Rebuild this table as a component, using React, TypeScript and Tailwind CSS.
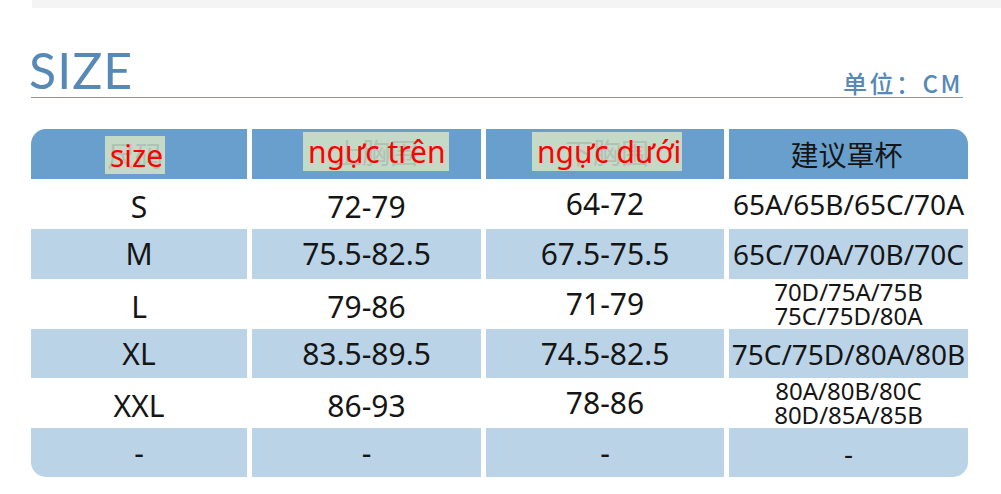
import React from 'react';

const sans = "font-['Noto_Sans','Noto_Sans_CJK_SC',sans-serif]";

type Row = {
  size: string;
  top: string;
  under: string;
  cup: string[];
  shaded: boolean;
  h: string;
};

const rows: Row[] = [
  { size: 'S', top: '72-79', under: '64-72', cup: ['65A/65B/65C/70A'], shaded: false, h: 'h-[50px]' },
  { size: 'M', top: '75.5-82.5', under: '67.5-75.5', cup: ['65C/70A/70B/70C'], shaded: true, h: 'h-[50px]' },
  { size: 'L', top: '79-86', under: '71-79', cup: ['70D/75A/75B', '75C/75D/80A'], shaded: false, h: 'h-[50px]' },
  { size: 'XL', top: '83.5-89.5', under: '74.5-82.5', cup: ['75C/75D/80A/80B'], shaded: true, h: 'h-[49px]' },
  { size: 'XXL', top: '86-93', under: '78-86', cup: ['80A/80B/80C', '80D/85A/85B'], shaded: false, h: 'h-[50px]' },
  { size: '-', top: '-', under: '-', cup: ['-'], shaded: true, h: 'h-[49px]' },
];

// red Vietnamese label pasted over the faded Chinese heading
const Label: React.FC<{ text: string; ghost: string; box: string }> = ({ text, ghost, box }) => (
  <div className={`relative bg-[#c5d9c7] ${box}`}>
    <span className="absolute inset-0 flex items-center justify-center font-['Noto_Sans_CJK_SC',sans-serif] text-[28px] leading-none text-[#b0c2b2]">
      {ghost}
    </span>
    <span className="relative block pl-[5px] font-['Noto_Sans',sans-serif] text-[30px] leading-[39px] text-[#ff0000] whitespace-nowrap">
      {text}
    </span>
  </div>
);

const App: React.FC = () => {
  return (
    <div className="w-[1001px] h-[494px] bg-white overflow-hidden">
      <div className="ml-[32px] h-[8px] bg-[#f4f4f4]" />

      <div className="ml-[31px] w-[932px] h-[90px] flex items-end justify-between border-b border-[#6f9bc5]">
        <span className="mb-[2px] -ml-[2px] font-['Lato',sans-serif] text-[50px] leading-none tracking-[1px] text-[#5689b6]">
          SIZE
        </span>
        <span className="mb-[2px] font-['Noto_Sans_CJK_SC',sans-serif] font-medium text-[24px] leading-none tracking-[2.5px] text-[#5689b6]">
          单位：CM
        </span>
      </div>

      <div className="ml-[31px] mt-[31px] w-[937px] grid grid-cols-[216px_229px_238px_239px] gap-x-[5px] text-[#151515]">
        <div className="h-[50px] rounded-tl-[15px] bg-[#689fcd] pl-[74px] pt-[7px]">
          <Label text="size" ghost="尺码" box="w-[60px] h-[38px]" />
        </div>
        <div className="h-[50px] bg-[#689fcd] pl-[51px] pt-[3px]">
          <Label text="ngực trên" ghost="上胸围" box="w-[146px] h-[39px]" />
        </div>
        <div className="h-[50px] bg-[#689fcd] pl-[46px] pt-[3px]">
          <Label text="ngực dưới" ghost="下胸围" box="w-[150px] h-[39px]" />
        </div>
        <div className="h-[50px] rounded-tr-[15px] bg-[#689fcd] flex items-center justify-center pr-[4px] font-['Noto_Sans_CJK_SC',sans-serif] text-[28px] leading-none">
          建议罩杯
        </div>

        {rows.map((r, i) => {
          const last = i === rows.length - 1;
          const bg = r.shaded ? 'bg-[#bbd3e7]' : 'bg-white';
          const drop = r.shaded ? '' : 'pt-[6px]';
          return (
            <React.Fragment key={i}>
              <div className={`${r.h} ${bg} ${drop} ${last ? 'rounded-bl-[15px]' : ''} flex items-center justify-center ${sans} text-[30px] leading-none`}>
                {r.size}
              </div>
              <div className={`${r.h} ${bg} ${drop} flex items-center justify-center ${sans} text-[30px] leading-none`}>
                {r.top}
              </div>
              <div className={`${r.h} ${bg} flex items-center justify-center ${sans} text-[30px] leading-none`}>
                {r.under}
              </div>
              <div className={`${r.h} ${bg} ${last ? 'rounded-br-[15px]' : ''} flex flex-col items-center justify-center ${sans} ${r.cup.length > 1 ? 'text-[24px] leading-[24px]' : 'text-[28px] leading-none'}`}>
                {r.cup.map((c) => (
                  <span key={c} className="whitespace-nowrap">{c}</span>
                ))}
              </div>
            </React.Fragment>
          );
        })}
      </div>
    </div>
  );
};

export default App;
